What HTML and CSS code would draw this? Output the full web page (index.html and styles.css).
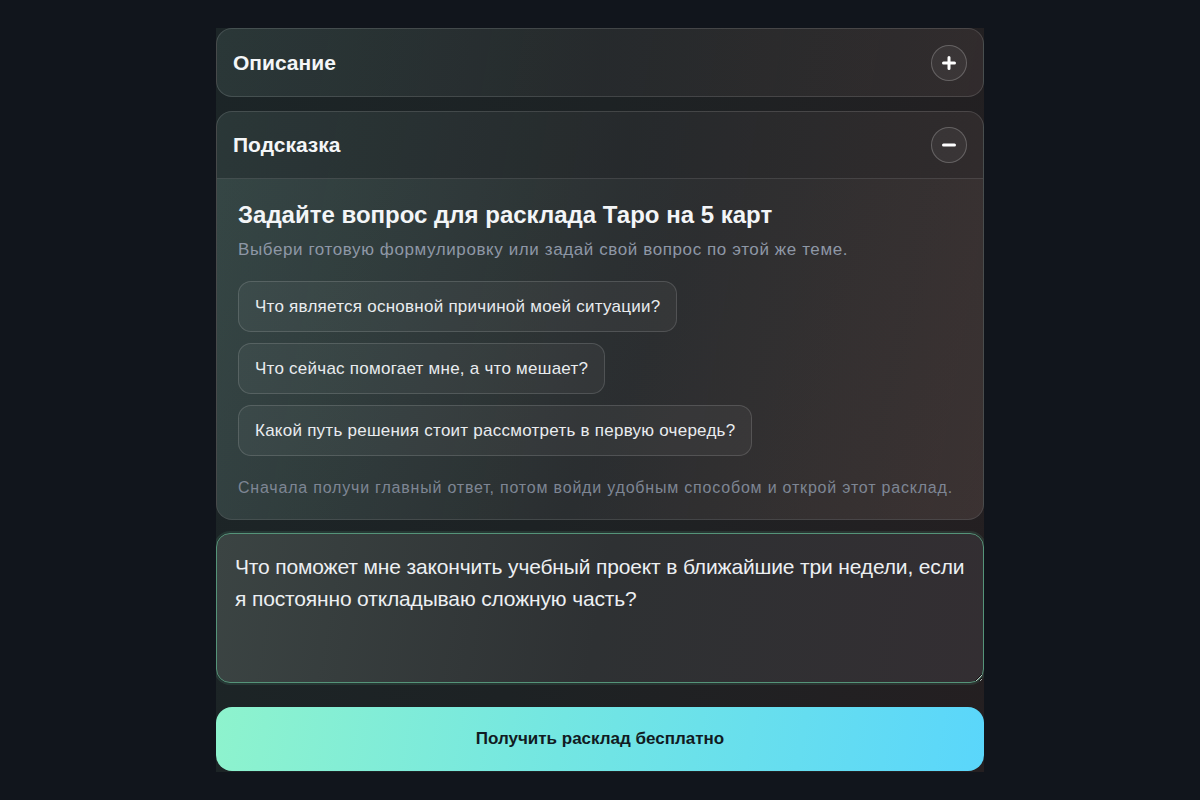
FILE: index.html
```html
<!DOCTYPE html>
<html lang="ru">
<head>
<meta charset="utf-8">
<title>Расклад Таро</title>
<link rel="stylesheet" href="styles.css">
</head>
<body>
<main class="panel">
  <section class="card">
    <div class="card-head">
      <h2 class="card-title">Описание</h2>
      <button class="toggle" aria-label="Развернуть">
        <svg width="14" height="14" viewBox="0 0 14 14"><path d="M7 1.5v11M1.5 7h11" stroke="#fff" stroke-width="3" stroke-linecap="round"/></svg>
      </button>
    </div>
  </section>

  <section class="card">
    <div class="card-head card-head-open">
      <h2 class="card-title">Подсказка</h2>
      <button class="toggle" aria-label="Свернуть">
        <svg width="14" height="14" viewBox="0 0 14 14"><path d="M1.5 7h11" stroke="#fff" stroke-width="3" stroke-linecap="round"/></svg>
      </button>
    </div>
    <div class="card-body">
      <h3 class="hint-title">Задайте вопрос для расклада Таро на 5 карт</h3>
      <p class="hint-sub">Выбери готовую формулировку или задай свой вопрос по этой же теме.</p>
      <div class="chips">
        <button class="chip">Что является основной причиной моей ситуации?</button>
        <button class="chip">Что сейчас помогает мне, а что мешает?</button>
        <button class="chip">Какой путь решения стоит рассмотреть в первую очередь?</button>
      </div>
      <p class="hint-foot">Сначала получи главный ответ, потом войди удобным способом и открой этот расклад.</p>
    </div>
  </section>

  <textarea class="question">Что поможет мне закончить учебный проект в ближайшие три недели, если я постоянно откладываю сложную часть?</textarea>

  <button class="cta">Получить расклад бесплатно</button>
</main>
</body>
</html>
```

FILE: styles.css
```css
* { box-sizing: border-box; }

html, body {
  margin: 0;
  padding: 0;
  background: #11151c;
}

body {
  font-family: "Liberation Sans", Arial, sans-serif;
  color: #eef1f4;
}

.panel {
  width: 768px;
  height: 744px;
  margin: 28px auto 0;
  overflow: hidden;
  display: flex;
  flex-direction: column;
  background: linear-gradient(100deg, #1c2527 0%, #1d2224 45%, #241f21 100%);
}

.card {
  border: 1px solid rgba(255, 255, 255, 0.13);
  border-radius: 16px;
  background: linear-gradient(100deg, rgba(70, 90, 88, 0.35) 0%, rgba(60, 62, 64, 0.3) 50%, rgba(78, 66, 66, 0.35) 100%);
  overflow: hidden;
  flex-shrink: 0;
}

.card + .card { margin-top: 14px; }

.card-head {
  height: 67px;
  display: flex;
  align-items: center;
  justify-content: space-between;
  padding: 0 16px;
}

.card-head-open {
  border-bottom: 1px solid rgba(255, 255, 255, 0.12);
}

.card-title {
  margin: 0;
  font-size: 21px;
  font-weight: 700;
  color: #f4f6f8;
}

.toggle {
  width: 36px;
  height: 36px;
  border-radius: 50%;
  border: 1.5px solid rgba(255, 255, 255, 0.22);
  background: rgba(255, 255, 255, 0.05);
  display: flex;
  align-items: center;
  justify-content: center;
  padding: 0;
}

.card-body {
  padding: 21px 21px 21px;
  background: linear-gradient(115deg, rgba(110, 150, 140, 0.16) 0%, rgba(90, 95, 95, 0.08) 55%, rgba(130, 100, 90, 0.12) 100%);
}

.hint-title {
  margin: 0;
  padding-top: 1px;
  font-size: 24px;
  line-height: 28px;
  font-weight: 700;
  color: #f3f5f7;
}

.hint-sub {
  margin: 10px 0 0;
  font-size: 17px;
  line-height: 22px;
  letter-spacing: 0.6px;
  color: #8e97a6;
}

.chips {
  margin-top: 20px;
  display: flex;
  flex-direction: column;
  align-items: flex-start;
  gap: 11px;
}

.chip {
  height: 51px;
  padding: 0 16px;
  border: 1px solid rgba(255, 255, 255, 0.14);
  border-radius: 13px;
  background: rgba(255, 255, 255, 0.045);
  font-family: "Liberation Sans", Arial, sans-serif;
  font-size: 17px;
  letter-spacing: 0.25px;
  color: #e9ecef;
}

.hint-foot {
  margin: 22px 0 0;
  font-size: 16px;
  line-height: 20px;
  letter-spacing: 0.8px;
  color: #7e8694;
}

.question {
  margin-top: 13px;
  height: 150px;
  flex-shrink: 0;
  width: 100%;
  padding: 17px 16px 17px 18px;
  border: 1.5px solid #559479;
  border-radius: 14px;
  background: linear-gradient(100deg, #3b4443 0%, #2e3133 50%, #332e32 100%);
  box-shadow: 0 0 0 2px rgba(79, 140, 116, 0.2);
  font-family: "Liberation Sans", Arial, sans-serif;
  font-size: 21px;
  letter-spacing: -0.15px;
  line-height: 32px;
  color: #eceff2;
  resize: vertical;
  outline: none;
}

.cta {
  margin-top: 24px;
  height: 64px;
  flex-shrink: 0;
  width: 100%;
  border: none;
  border-radius: 16px;
  background: linear-gradient(100deg, #8ef3cd 0%, #73e6e2 45%, #5ad6fb 100%);
  font-family: "Liberation Sans", Arial, sans-serif;
  font-size: 17px;
  font-weight: 700;
  color: #111b22;
}
```
